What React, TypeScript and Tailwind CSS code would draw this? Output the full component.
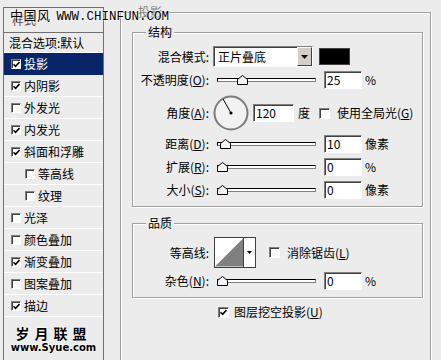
import React from "react";

// sunken edge used by text fields, check boxes and the combo box
const sunken =
  "border border-t-[#808080] border-l-[#808080] border-r-white border-b-white shadow-[inset_1px_1px_0_#404040]";
const etched = "border border-[#a0a0a0] shadow-[inset_1px_1px_0_#fff,1px_1px_0_#fff]";

function Box({ on, small }: { on?: boolean; small?: boolean }) {
  return (
    <span
      className={`relative inline-flex shrink-0 items-center justify-center bg-white ${sunken} ${
        small ? "h-[10px] w-[10px]" : "h-[11px] w-[11px]"
      }`}
    >
      {on && (
        <svg width="7" height="7" viewBox="0 0 7 7" className="absolute left-[1px] top-[1px]">
          <path d="M0.5 3.2 L2.6 5.3 L6.5 1" fill="none" stroke="#000" strokeWidth="1.6" />
        </svg>
      )}
    </span>
  );
}

function Field({ v, w = "w-[38px]" }: { v: string; w?: string }) {
  return (
    <div className={`h-[18px] bg-white pl-[2px] text-[12px] leading-[15px] text-black ${sunken} ${w}`}>
      {v}
    </div>
  );
}

function Slider({ at }: { at: number }) {
  return (
    <div className="relative ml-[8px] h-[12px] w-[99px]">
      <div className="absolute left-0 right-0 top-[4px] h-[4px] border border-t-black border-l-black border-b-[#808080] border-r-[#808080] bg-white" />
      <svg className="absolute top-[1px]" style={{ left: at - 5 }} width="11" height="10" viewBox="0 0 11 10">
        <polygon points="0.5,9.5 0.5,4.5 5.5,0.5 10.5,4.5 10.5,9.5" fill="#f4f4f4" stroke="#000" />
      </svg>
    </div>
  );
}

function Label({ children }: { children: React.ReactNode }) {
  return <div className="w-[76px] shrink-0 text-right text-[12px] leading-[14px] text-black">{children}</div>;
}

function SliderRow({ label, at, v, unit, mt = "mt-[3px]" }: { label: React.ReactNode; at: number; v: string; unit: string; mt?: string }) {
  return (
    <div className={`flex h-[20px] items-center ${mt}`}>
      <Label>{label}</Label>
      <Slider at={at} />
      <div className="ml-[8px]">
        <Field v={v} />
      </div>
      <span className="ml-[3px] text-[12px] text-black">{unit}</span>
    </div>
  );
}

function Group({ title, children, mt }: { title: string; children: React.ReactNode; mt: string }) {
  return (
    <div className={`relative w-[291px] pb-[6px] ${etched} ${mt}`}>
      <span className="absolute left-[13px] top-[-9px] h-[16px] bg-[#ececec] px-[2px] text-[12px] leading-[16px] text-black">
        {title}
      </span>
      {children}
    </div>
  );
}

const styles = [
  { t: "投影", on: true, sel: true },
  { t: "内阴影", on: true },
  { t: "外发光" },
  { t: "内发光", on: true },
  { t: "斜面和浮雕", on: true },
  { t: "等高线", sub: true },
  { t: "纹理", sub: true },
  { t: "光泽" },
  { t: "颜色叠加" },
  { t: "渐变叠加", on: true },
  { t: "图案叠加" },
  { t: "描边", on: true },
];

export default function App() {
  return (
    <div className="relative h-[360px] w-[441px] overflow-hidden bg-[#ececec] font-['Noto_Sans_CJK_SC',sans-serif] text-black">
      <div className="flex items-start">
        {/* style list */}
        <div className="ml-[3px] mt-[7px] h-[380px] w-[101px] border border-[#707070]">
          <div className="h-[25px] border-b border-[#707070] pl-[8px] pt-[5px] text-[12px] leading-[14px] text-[#555]">样式</div>
          <div className="flex h-[20px] items-center border-b border-white pl-[5px] text-[12px]">混合选项:默认</div>
          {styles.map((s, i) => (
            <div
              key={i}
              className={`flex h-[22px] items-center border-b text-[12px] ${s.sub ? "pl-[21px]" : "pl-[7px]"} ${
                s.sel ? "border-[#0a246a] bg-[#0a246a] text-white" : "border-white"
              }`}
            >
              <Box on={s.on} small />
              <span className="ml-[3px]">{s.t}</span>
            </div>
          ))}
          <div className="mt-[8px] text-center text-[14px] font-bold leading-[16px] tracking-[5px] text-black [text-shadow:0_0_2px_#fff,0_0_2px_#fff]">
            岁月联盟
          </div>
          <div className="mt-[1px] text-center font-['DejaVu_Sans',sans-serif] text-[10px] font-bold leading-[12px] text-black [text-shadow:0_0_2px_#fff,0_0_2px_#fff]">
            www.Syue.com
          </div>
        </div>

        {/* settings */}
        <div className={`relative ml-[16px] mt-[12px] h-[380px] w-[311px] pl-[11px] pr-[7px] pt-[19px] ${etched}`}>
          <span className="absolute left-[16px] top-[-9px] h-[16px] bg-[#ececec] px-[1px] text-[12px] leading-[16px] text-[#7a7a7a]">
            投影
          </span>

          <Group title="结构" mt="mt-0">
            <div className="mt-[13px] flex h-[21px] items-center">
              <Label>混合模式:</Label>
              <div className={`ml-[4px] flex h-[21px] w-[100px] items-center bg-white ${sunken}`}>
                <span className="flex-1 pl-[4px] text-[12px]">正片叠底</span>
                <span className="flex h-full w-[15px] items-center justify-center border border-t-white border-l-white border-r-[#404040] border-b-[#404040] bg-[#d4d0c8]">
                  <svg width="7" height="4" viewBox="0 0 7 4">
                    <polygon points="0,0 7,0 3.5,4" fill="#000" />
                  </svg>
                </span>
              </div>
              <div className="ml-[6px] h-[17px] w-[31px] border border-[#404040] bg-black" />
            </div>

            <SliderRow label={<>不透明度(<u>O</u>):</>} at={25} v="25" unit="%" />

            <div className="mt-[5px] flex h-[36px] items-center">
              <Label>角度(<u>A</u>):</Label>
              <svg className="ml-[4px]" width="36" height="36" viewBox="0 0 36 36">
                <circle cx="18" cy="18" r="16.5" fill="#f2f2f2" stroke="#7c7c7c" strokeWidth="2" />
                <line x1="18" y1="18" x2="10" y2="4" stroke="#000" strokeWidth="1" />
                <circle cx="18" cy="18" r="1.6" fill="#000" />
              </svg>
              <div className="ml-[4px]">
                <Field v="120" w="w-[41px]" />
              </div>
              <span className="ml-[4px] text-[12px]">度</span>
              <span className="ml-[9px] flex">
                <Box />
              </span>
              <span className="ml-[7px] text-[12px]">使用全局光(<u>G</u>)</span>
            </div>

            <SliderRow label={<>距离(<u>D</u>):</>} at={8} v="10" unit="像素" />
            <SliderRow label={<>扩展(<u>R</u>):</>} at={5} v="0" unit="%" />
            <SliderRow label={<>大小(<u>S</u>):</>} at={5} v="0" unit="像素" />
          </Group>

          <Group title="品质" mt="mt-[16px]">
            <div className="mt-[13px] flex h-[31px] items-center">
              <Label>等高线:</Label>
              <div className="ml-[5px] flex h-[31px] w-[42px] border border-[#404040] bg-white">
                <svg width="29" height="29" viewBox="0 0 29 29" className="border-r border-[#404040]">
                  <polygon points="0,29 29,0 29,29" fill="#808080" />
                </svg>
                <span className="flex flex-1 items-center justify-center">
                  <svg width="5" height="3" viewBox="0 0 5 3">
                    <polygon points="0,0 5,0 2.5,3" fill="#000" />
                  </svg>
                </span>
              </div>
              <span className="ml-[13px] flex">
                <Box />
              </span>
              <span className="ml-[7px] text-[12px]">消除锯齿(<u>L</u>)</span>
            </div>
            <SliderRow label={<>杂色(<u>N</u>):</>} at={5} v="0" unit="%" />
          </Group>

          <div className="ml-[86px] mt-[8px] flex h-[12px] items-center">
            <Box on />
            <span className="ml-[5px] text-[12px]">图层挖空投影(<u>U</u>)</span>
          </div>
        </div>
      </div>

      {/* site watermark laid over the top edge */}
      <div className="absolute left-[10px] top-[7px] flex items-baseline text-black [text-shadow:0_0_2px_#fff,0_0_2px_#fff]">
        <span className="text-[13px] leading-[15px] tracking-[0.5px]">中国风</span>
        <span className="ml-[6px] font-['Liberation_Mono',monospace] text-[12.5px] leading-[15px]">WWW.CHINFUN.COM</span>
      </div>
    </div>
  );
}
